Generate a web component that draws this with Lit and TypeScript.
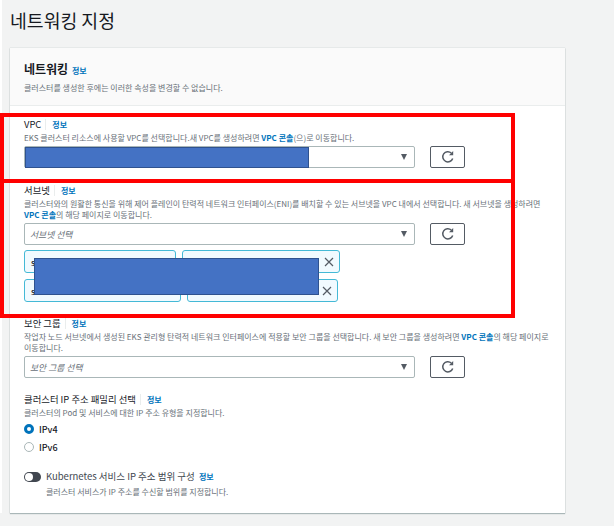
import { LitElement, html, css } from "lit";
import { customElement } from "lit/decorators.js";

const refresh = html`<svg class="ri" viewBox="0 0 14 14" width="14" height="14"><path d="M11.7 8.4A5.1 5.1 0 1 1 10.3 3" fill="none" stroke="#545b64" stroke-width="1.5"/><path d="M12.2 1v4.2H8z" fill="#545b64"/></svg>`;
const x = html`<svg class="x" viewBox="0 0 10 10" width="10" height="10"><path d="M1 1l8 8M9 1L1 9" stroke="#545b64" stroke-width="1.2" fill="none"/></svg>`;

@customElement("app-root")
export class AppRoot extends LitElement {
  static styles = css`
    :host { display: block; position: relative; width: 614px; height: 526px; overflow: hidden; background: #f2f3f3; font-family: "Noto Sans CJK KR", "Noto Sans", sans-serif; color: #16191f; }
    .page { padding: 0 49px 0 8px; border-left: 2px solid #fff; }
    h1 { margin: 0; height: 48px; font-size: 18.3px; line-height: 41px; font-weight: 400; }
    .card { background: #fff; height: 465px; box-sizing: border-box; box-shadow: 0 0 1px #aab7b8, 0 1px 1px #aab7b8; }
    .head { height: 58px; box-sizing: border-box; background: #fafafa; border-bottom: 1px solid #eaeded; padding: 12px 14px 0; }
    .head h2 { margin: 0; font-size: 12px; line-height: 17px; font-weight: 700; }
    .head h2 a { font-size: 8px; margin-left: 1px; }
    a { color: #0073bb; font-weight: 700; text-decoration: none; }
    .desc { font-size: 8px; line-height: 11px; color: #687078; margin: 0; }
    .head .desc { margin-top: 3px; }
    .body { padding: 12px 14px 0; display: flex; flex-direction: column; }
    .label { display: flex; align-items: center; font-size: 9.4px; line-height: 13px; font-weight: 400; height: 13px; }
    .label a { font-size: 8px; margin-left: 4px; padding-left: 6px; border-left: 1px solid #eaeded; line-height: 11px; }
    .label + .desc { margin-top: 1px; }
    .sel-row { display: flex; gap: 15px; margin-top: 3px; }
    .select { width: 391px; height: 22px; box-sizing: border-box; background: #fff; border: 1px solid #aab7b8; border-radius: 2px; display: flex; align-items: center; justify-content: space-between; padding: 0 6px 0 5px; font-size: 8.8px; font-style: italic; color: #687078; }
    .arrow { width: 0; height: 0; border-left: 3.5px solid transparent; border-right: 3.5px solid transparent; border-top: 6px solid #545b64; margin-right: 1px; }
    .btn { width: 35px; height: 22px; box-sizing: border-box; border: 1px solid #545b64; border-radius: 2px; background: #fff; display: flex; align-items: center; justify-content: center; }
    .chips { display: grid; row-gap: 6px; margin-top: 5px; }
    .row { display: flex; gap: 6px; }
    .chip { height: 23px; box-sizing: border-box; border: 1px solid #44b9d6; border-radius: 3px; background: #f1faff; display: flex; align-items: center; justify-content: space-between; padding: 0 5px 0 6px; font-size: 8.5px; font-weight: 500; }
    .vpc { margin-bottom: 16px; }
    .sub { margin-bottom: 15px; }
    .sg { margin-bottom: 15px; }
    .radio { display: flex; align-items: center; gap: 5px; font-size: 9px; font-weight: 500; height: 18px; }
    .radios { margin-top: 2px; margin-bottom: 14px; }
    .dot { width: 10px; height: 10px; box-sizing: border-box; border-radius: 50%; border: 1px solid #aab7b8; background: #fff; }
    .dot.on { border: 3px solid #0073bb; }
    .toggle { display: flex; gap: 5px; }
    .track { width: 17px; height: 10px; border-radius: 5px; background: #414750; position: relative; margin-top: 2px; flex: none; }
    .track::after { content: ""; position: absolute; left: 1px; top: 1px; width: 8px; height: 8px; border-radius: 50%; background: #fff; }
    .t-title { font-size: 9.5px; line-height: 13px; font-weight: 400; color: #414750; }
    .t-title a { font-size: 8px; margin-left: 2px; }
    .toggle .desc { margin-top: 3px; }
    .blue { position: absolute; background: #4472c4; border: 1px solid #2f528f; box-sizing: border-box; }
    .red { position: absolute; border: 4px solid #ff0000; box-sizing: border-box; }
  `;

  render() {
    return html`
      <div class="page">
        <h1>네트워킹 지정</h1>
        <div class="card">
          <div class="head">
            <h2>네트워킹 <a>정보</a></h2>
            <p class="desc">클러스터를 생성한 후에는 이러한 속성을 변경할 수 없습니다.</p>
          </div>
          <div class="body">
            <section class="vpc">
              <div class="label">VPC<a>정보</a></div>
              <p class="desc">EKS 클러스터 리소스에 사용할 VPC를 선택합니다.새 VPC를 생성하려면 <a>VPC 콘솔</a>(으)로 이동합니다.</p>
              <div class="sel-row">
                <div class="select"><span></span><i class="arrow"></i></div>
                <div class="btn">${refresh}</div>
              </div>
            </section>
            <section class="sub">
              <div class="label">서브넷<a>정보</a></div>
              <p class="desc">클러스터와의 원활한 통신을 위해 제어 플레인이 탄력적 네트워크 인터페이스(ENI)를 배치할 수 있는 서브넷을 VPC 내에서 선택합니다. 새 서브넷을 생성하려면 <a>VPC 콘솔</a>의 해당 페이지로 이동합니다.</p>
              <div class="sel-row">
                <div class="select"><span>서브넷 선택</span><i class="arrow"></i></div>
                <div class="btn">${refresh}</div>
              </div>
              <div class="chips">
                <div class="row">
                  <div class="chip" style="width:152px">s</div>
                  <div class="chip" style="width:158px"><span></span>${x}</div>
                </div>
                <div class="row">
                  <div class="chip" style="width:157px">s</div>
                  <div class="chip" style="width:151px"><span></span>${x}</div>
                </div>
              </div>
            </section>
            <section class="sg">
              <div class="label">보안 그룹<a>정보</a></div>
              <p class="desc">작업자 노드 서브넷에서 생성된 EKS 관리형 탄력적 네트워크 인터페이스에 적용할 보안 그룹을 선택합니다. 새 보안 그룹을 생성하려면 <a>VPC 콘솔</a>의 해당 페이지로 이동합니다.</p>
              <div class="sel-row">
                <div class="select"><span>보안 그룹 선택</span><i class="arrow"></i></div>
                <div class="btn">${refresh}</div>
              </div>
            </section>
            <section>
              <div class="label">클러스터 IP 주소 패밀리 선택<a>정보</a></div>
              <p class="desc">클러스터의 Pod 및 서비스에 대한 IP 주소 유형을 지정합니다.</p>
              <div class="radios">
                <div class="radio"><span class="dot on"></span>IPv4</div>
                <div class="radio"><span class="dot"></span>IPv6</div>
              </div>
            </section>
            <div class="toggle">
              <span class="track"></span>
              <div>
                <div class="t-title">Kubernetes 서비스 IP 주소 범위 구성 <a>정보</a></div>
                <p class="desc">클러스터 서비스가 IP 주소를 수신할 범위를 지정합니다.</p>
              </div>
            </div>
          </div>
        </div>
      </div>
      <div class="blue" style="left:25px;top:147px;width:284px;height:21px"></div>
      <div class="blue" style="left:34px;top:258px;width:285px;height:37px"></div>
      <div class="red" style="left:0;top:113px;width:515px;height:70px"></div>
      <div class="red" style="left:0;top:179px;width:515px;height:139px"></div>
    `;
  }
}
